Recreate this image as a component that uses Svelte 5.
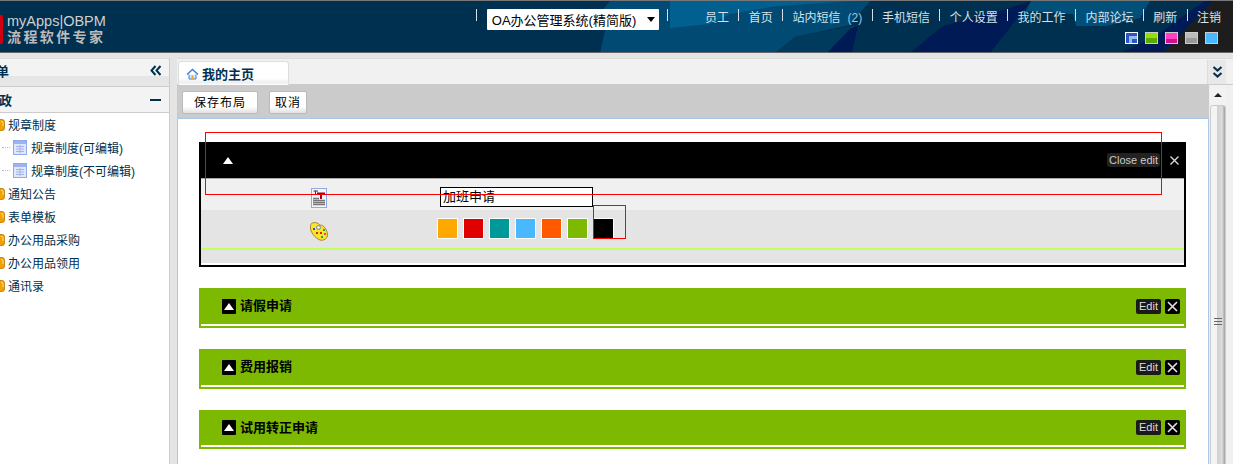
<script>
  const links = [
    { label: '员工' }, { label: '首页' }, { label: '站内短信', count: '(2)' }, { label: '手机短信' },
    { label: '个人设置' }, { label: '我的工作' }, { label: '内部论坛' }, { label: '刷新' }, { label: '注销' }
  ];
  const skins = ['blue', 'green', 'pink', 'gray', 'sky'];
  const menu = ['通知公告', '表单模板', '办公用品采购', '办公用品领用', '通讯录'];
  const colors = ['#ffa800', '#e00000', '#009999', '#4ab8ff', '#ff5a00', '#7db900', '#000000'];
  const portlets = ['请假申请', '费用报销', '试用转正申请'];
</script>

{#snippet folder()}
  <svg class="folder" width="5" height="12" viewBox="0 0 5 12"><path d="M-4 0.500H2a2.500 2.500 0 0 1 2.500 2.500V9A2.500 2.500 0 0 1 2 11.500H-4z" fill="#f0a000" stroke="#b87800" stroke-width="0.8"/><path d="M1 2.500h1a1 1 0 0 1 1 1V7" fill="none" stroke="#ffe08a" stroke-width="1"/></svg>
{/snippet}

{#snippet grid()}
  <svg width="14" height="15" viewBox="0 0 14 15"><rect x="0.500" y="0.500" width="13" height="14" fill="#dfe8fb" stroke="#8fa9ec"/><rect x="1" y="1" width="12" height="3" fill="#9db4ef"/><path d="M3 6.500h8M3 9h8M3 11.500h8M7 5v8" stroke="#9fb4e8" fill="none"/></svg>
{/snippet}

<div class="page">
  <header class="top">
    <svg class="art" width="1233" height="51" viewBox="0 0 1233 51">
      <path d="M610 0L603 8L605 30L600 52H775L795 36L850 24L870 0Z" fill="#014a73"/>
      <path d="M670 0V27L710 23L730 13L777 5L853 0Z" fill="#01608f"/>
      <path d="M775 52L795 36L856 24L827 52Z" fill="#003a5c"/>
      <path d="M827 52L850 28L858 25L852 52Z" fill="#001a55"/>
      <path d="M910 52L943 25L1000 10L1031 0L990 52Z" fill="#001a55"/>
      <path d="M1031 0H1150L1140 17L1106 25L1076 25L1073 13L1026 10Z" fill="#01507a"/>
      <path d="M1120 52L1153 37L1186 13L1205 0H1213L1163 52Z" fill="#001a55"/>
      <path d="M1163 52L1213 0H1233V52Z" fill="#1d1d1d"/>
    </svg>
    <div class="logo">
      <span class="mark"></span>
      <div class="logo-text">
        <span class="logo-en">myApps|OBPM</span>
        <span class="logo-cn">流程软件专家</span>
      </div>
    </div>
    <div class="top-right">
      <div class="nav">
        <i class="sep"></i>
        <div class="select"><span>OA办公管理系统(精简版)</span><b class="caret"></b></div>
        <i class="sep"></i>
        {#each links as link, i}
          {#if i > 0}<i class="sep"></i>{/if}
          <span class="link" class:first={i === 0}>{link.label}{#if link.count}<em>{link.count}</em>{/if}</span>
        {/each}
      </div>
      <div class="skins">
        {#each skins as skin}<span class="skin {skin}"></span>{/each}
      </div>
    </div>
  </header>

  <div class="body">
    <aside class="side">
      <div class="side-title">
        <strong>菜单</strong>
        <svg class="collapse" width="12" height="11" viewBox="0 0 12 11"><path d="M5.500 1L1.500 5.500L5.500 10M10.500 1L6.500 5.500L10.500 10" fill="none" stroke="#00304f" stroke-width="2"/></svg>
      </div>
      <div class="side-group"><strong>行政</strong><span class="minus"></span></div>
      <ul class="tree">
        <li>{@render folder()}规章制度</li>
        <li class="sub"><i class="dots"></i>{@render grid()}<span>规章制度(可编辑)</span></li>
        <li class="sub"><i class="dots"></i>{@render grid()}<span>规章制度(不可编辑)</span></li>
        {#each menu as item}
          <li>{@render folder()}{item}</li>
        {/each}
      </ul>
    </aside>

    <main class="main">
      <div class="tabs">
        <div class="tab">
          <svg width="13" height="12" viewBox="0 0 13 12"><path d="M1 6.500L6.500 1.500L12 6.500" fill="none" stroke="#3f7fd8" stroke-width="1.500"/><path d="M3 6.500V11H10V6.500" fill="#dce9fb" stroke="#3f7fd8"/><rect x="5.500" y="7.500" width="2" height="3.500" fill="#f0a030"/></svg>
          <strong>我的主页</strong>
        </div>
        <div class="tabs-more">
          <svg width="11" height="12" viewBox="0 0 11 12"><path d="M1.500 1L5.500 4.500L9.500 1M1.500 7L5.500 10.500L9.500 7" fill="none" stroke="#0a3050" stroke-width="2.200"/></svg>
        </div>
      </div>

      <div class="workarea">
        <div class="column">
          <div class="toolbar">
            <button class="save">保存布局</button>
            <button class="cancel">取消</button>
          </div>
          <div class="content">
            <section class="editing">
              <div class="edit-head">
                <span class="tri"></span>
                <span class="close-edit">Close edit</span>
                <svg width="9" height="9" viewBox="0 0 9 9"><path d="M0.500 0.500L8.500 8.500M8.500 0.500L0.500 8.500" stroke="#ddd" stroke-width="1.300"/></svg>
              </div>
              <div class="row first">
                <div class="cell-icon">
                  <svg width="16" height="20" viewBox="0 0 16 20"><rect x="0.500" y="0.500" width="15" height="19" fill="#f4f6ff" stroke="#8fa9ec"/><path d="M2.500 3H7M4.500 3V6" stroke="#333" fill="none"/><path d="M6 4.500H14V6.500H11V11H9V6.500H6Z" fill="#a00010"/><path d="M2 10.500H8M2 12.500H14M2 14.500H14M2 16.500H14" stroke="#777" stroke-width="1.300" fill="none"/></svg>
                </div>
                <input class="title-input" value="加班申请" />
              </div>
              <div class="row second">
                <div class="cell-icon">
                  <svg width="18" height="19" viewBox="0 0 18 19"><path d="M2 1C6 0 8 1 10 3C14 3 17 8 17.500 12C18 17 13 19 10 18C5 16 0 10 0.500 5C0.500 3 1 1.500 2 1Z" fill="#f7e62a" stroke="#b08040" stroke-width="1"/><circle cx="8.500" cy="5.500" r="2" fill="#e6e6e6" stroke="#888"/><rect x="3" y="6" width="2" height="2" fill="#3050d0"/><rect x="6" y="10" width="2" height="2" fill="#e02020"/><rect x="10" y="10" width="2" height="2" fill="#e02020"/><rect x="13" y="7" width="2" height="2" fill="#30a040"/><rect x="11" y="14" width="2" height="2" fill="#30a040"/><rect x="14" y="11" width="2" height="2" fill="#e040a0"/></svg>
                </div>
                <div class="swatches">
                  {#each colors as color}<span class="swatch" style="background: {color}"></span>{/each}
                </div>
              </div>
              <div class="row third"></div>
            </section>

            {#each portlets as name, i}
              <section class="portlet" class:last={i === portlets.length - 1}>
                <div class="portlet-head">
                  <span class="tri-box"><span class="tri"></span></span>
                  <strong>{name}</strong>
                  <span class="edit">Edit</span>
                  <span class="close">
                    <svg width="11" height="11" viewBox="0 0 11 11"><path d="M1 1L10 10M10 1L1 10" stroke="#e4e4e4" stroke-width="1.600"/></svg>
                  </span>
                </div>
              </section>
            {/each}

            <div class="outline big"></div>
            <div class="outline small"></div>
          </div>
        </div>
        <div class="scrollbar">
          <div class="arrow"><span></span></div>
          <div class="thumb"><i></i></div>
        </div>
      </div>
    </main>
  </div>
</div>

<style>
  :global(body) {
    margin: 0;
    overflow: hidden;
    background: #fff;
  }

  .page {
    width: 1233px;
    height: 464px;
    overflow: hidden;
    font-family: "Liberation Sans", "Noto Sans CJK SC", sans-serif;
    font-size: 12px;
    color: #00304f;
    display: flex;
    flex-direction: column;
    background: #e4e4e4;
  }

  .top {
    position: relative;
    height: 51px;
    flex: none;
    background: #00304f;
    border-top: 1px solid #777;
    border-bottom: 1px solid #666;
    display: flex;
    justify-content: space-between;
  }

  .art {
    position: absolute;
    left: 0;
    top: 0;
  }

  .logo {
    position: relative;
    display: flex;
    align-items: flex-start;
    gap: 4px;
    padding-top: 13px;
    margin-left: -4px;
  }

  .mark {
    width: 7px;
    height: 29px;
    margin-top: 1px;
    background: #d00010;
    border-radius: 2px;
  }

  .logo-text {
    display: flex;
    flex-direction: column;
    color: #cfcfcf;
    line-height: 14px;
  }

  .logo-en {
    font-size: 14.500px;
  }

  .logo-cn {
    font-size: 14px;
    font-weight: 700;
    letter-spacing: 2.400px;
    color: #bcbcbc;
    margin-top: 2px;
  }

  .top-right {
    position: relative;
    display: flex;
    flex-direction: column;
    align-items: flex-end;
    padding-right: 12px;
  }

  .nav {
    display: flex;
    align-items: center;
    gap: 9.400px;
    margin-top: 8px;
    height: 21px;
    color: #d5e2ea;
  }

  .sep {
    width: 1px;
    height: 12px;
    background: #d8e0e6;
    margin-top: -9px;
  }

  .select {
    width: 172px;
    height: 21px;
    background: #fff;
    color: #000;
    font-size: 13px;
    margin-right: -1px;
    padding: 0 4px 0 5px;
    box-sizing: border-box;
    display: flex;
    align-items: center;
    justify-content: space-between;
    border-radius: 1px;
  }

  .caret {
    border: 4px solid transparent;
    border-top: 5px solid #000;
    border-bottom: 0;
  }

  .link {
    white-space: nowrap;
    margin-top: -7px;
  }

  .link.first {
    margin-left: 27.400px;
  }

  .link em {
    font-style: normal;
    color: #9cc4e4;
    margin-left: 7px;
  }

  .skins {
    display: flex;
    gap: 7px;
    margin: 2px 3px 0 0;
  }

  .skin {
    width: 13px;
    height: 12px;
    box-sizing: border-box;
    border: 1px solid #ccc;
  }

  .skin.blue {
    background: #2a55c8;
    box-shadow: inset 2px 2px 0 1px #2a55c8, inset 5px 5px 0 1px #9db8ee;
    border-color: #fff;
  }

  .skin.green { background: linear-gradient(#90e000 50%, #5fa800 50%); }
  .skin.pink { background: linear-gradient(#ff40c0 65%, #d01090 65%); }
  .skin.gray { background: linear-gradient(#bbb 50%, #999 50%); }
  .skin.sky { background: #4ab8ff; }

  .body {
    flex: 1;
    display: flex;
    min-height: 0;
    border-top: 5px solid #e4e4e4;
    gap: 7px;
  }

  .side {
    width: 169px;
    flex: none;
    background: #fff;
    border-right: 1px solid #ccc;
    overflow: hidden;
  }

  .side-title {
    height: 23px;
    padding-bottom: 4px;
    display: flex;
    justify-content: space-between;
    align-items: center;
    background: linear-gradient(#f3f3f3 62%, #e6e6e6 62%);
    border-top: 1px solid #ddd;
    border-bottom: 1px solid #ccc;
    font-size: 13px;
  }

  .side-title strong {
    margin-left: -17px;
  }

  .side-group strong {
    margin-left: -14px;
  }

  .collapse {
    margin-right: 7px;
  }

  .side-group {
    height: 25px;
    display: flex;
    justify-content: space-between;
    align-items: center;
    background: #f3f3f3;
    border-bottom: 1px solid #ccc;
    font-size: 13px;
  }

  .minus {
    width: 11px;
    height: 2px;
    background: #00304f;
    margin-right: 8px;
  }

  .tree {
    list-style: none;
    margin: 0;
    padding: 0;
  }

  .tree li {
    height: 23px;
    display: flex;
    align-items: center;
  }

  .folder {
    margin-right: 3px;
  }

  .tree li.sub {
    padding-left: 2px;
  }

  .tree li.sub span {
    margin-left: 4px;
  }

  .dots {
    width: 8px;
    margin-right: 3px;
    border-top: 1px dotted #bbb;
  }

  .main {
    flex: 1;
    min-width: 0;
    display: flex;
    flex-direction: column;
    background: #e8e8e8;
  }

  .tabs {
    height: 27px;
    flex: none;
    display: flex;
    justify-content: space-between;
    background: #f1f1f1;
    border-top: 1px solid #ddd;
    border-bottom: 1px solid #ccc;
    box-sizing: border-box;
  }

  .tab {
    margin: 2px 0 -1px 1px;
    width: 111px;
    box-sizing: border-box;
    background: linear-gradient(#fff 70%, #eee 90%, #fff);
    border: 1px solid #ddd;
    border-bottom: 0;
    border-radius: 3px 3px 0 0;
    display: flex;
    align-items: center;
    gap: 3px;
    padding-left: 7px;
    font-size: 13px;
  }

  .tabs-more {
    width: 18px;
    margin: 1px 7px 0 0;
    background: #e8e8e8;
    border-left: 1px solid #ddd;
    display: flex;
    align-items: center;
    justify-content: center;
  }

  .workarea {
    flex: 1;
    min-height: 0;
    display: flex;
    gap: 1px;
    padding-right: 7px;
    background: #f0f0f0;
  }

  .column {
    flex: 1;
    min-width: 0;
    display: flex;
    flex-direction: column;
  }

  .toolbar {
    height: 33px;
    flex: none;
    background: #cbcbcb;
    display: flex;
    align-items: flex-start;
    gap: 11px;
    padding: 6px 5px 0;
    box-sizing: border-box;
  }

  .toolbar button {
    height: 23px;
    padding: 0 0 2px;
    border: 1px solid #bbb;
    border-radius: 2px;
    background: linear-gradient(#fff 70%, #e0e0e0);
    font-family: inherit;
    font-size: 12px;
    color: #000;
    letter-spacing: 1px;
  }

  .save { width: 76px; }
  .cancel { width: 38px; }

  .content {
    position: relative;
    flex: 1;
    min-height: 0;
    background: #fff;
    border: 1px solid #a8c8e8;
    border-bottom: 0;
    padding: 23px 22px 0 21px;
    overflow: hidden;
  }

  .editing {
    border: 2px solid #000;
    border-top: 0;
    margin-bottom: 21px;
    height: 125px;
    box-sizing: border-box;
    display: flex;
    flex-direction: column;
  }

  .edit-head {
    height: 36px;
    flex: none;
    display: flex;
    align-items: center;
    padding: 0 7px 0 22px;
    background: #000;
    margin: 0 -2px;
  }

  .tri {
    display: block;
    width: 0;
    height: 0;
    border-left: 5px solid transparent;
    border-right: 5px solid transparent;
    border-bottom: 7px solid #fff;
  }

  .edit-head .tri {
    margin-left: 2px;
  }

  .close-edit {
    margin: 0 10px 0 auto;
    background: #222;
    color: #ccc;
    font-size: 11px;
    padding: 0 2px;
    line-height: 14px;
    border-radius: 3px;
  }

  .row {
    display: flex;
    align-items: flex-start;
  }

  .row.first {
    height: 32px;
    flex: none;
    box-sizing: border-box;
    background: #f0f0f0;
    border-top: 1px solid #aaa;
  }

  .row.second {
    height: 38px;
    flex: none;
    background: #e4e4e4;
  }

  .row.third {
    flex: 1;
    background: #e4e4e4;
    border-top: 2px solid #c4ff60;
    border-bottom: 2px solid #fff;
  }

  .cell-icon {
    width: 238px;
    padding: 9px 0 0 110px;
    box-sizing: border-box;
    flex: none;
    display: flex;
  }

  .row.second .cell-icon {
    padding: 12px 0 0 109px;
  }

  .title-input {
    width: 153px;
    height: 20px;
    box-sizing: border-box;
    border: 1px solid #000;
    background: #fff;
    padding: 0 2px 3px;
    margin: 8px 0 0 1px;
    font-family: inherit;
    font-size: 13px;
    color: #000;
    border-radius: 0;
    outline: none;
  }

  .swatches {
    display: flex;
    gap: 5px;
    margin: 8px 0 0 -2px;
  }

  .swatch {
    width: 21px;
    height: 21px;
    box-sizing: border-box;
    border: 1px solid #fff;
  }

  .portlet {
    background: #7db900;
    margin-bottom: 21px;
    padding: 0 2px 2px;
  }

  .portlet-head {
    height: 36px;
    display: flex;
    align-items: center;
    padding: 0 4px 0 21px;
    border-bottom: 2px solid #fff;
    color: #000;
    font-size: 13px;
    gap: 4px;
  }

  .portlet.last .portlet-head {
    height: 35px;
  }

  .portlet-head strong {
    margin-top: -3px;
  }

  .tri-box {
    width: 14px;
    height: 15px;
    background: #000;
    border-radius: 1px;
    display: flex;
    align-items: center;
    justify-content: center;
  }

  .edit {
    margin-left: auto;
    background: #1a1a1a;
    color: #ddd;
    font-size: 11px;
    line-height: 15px;
    border-radius: 2px;
    width: 25px;
    height: 15px;
    text-align: center;
  }

  .close {
    width: 15px;
    height: 15px;
    background: #000;
    border-radius: 2px;
    display: flex;
    align-items: center;
    justify-content: center;
  }

  /* red frames that sit on top of the editor */
  .outline {
    position: absolute;
    border: 1px solid #f00;
    box-sizing: border-box;
  }

  .outline.big {
    left: 27px;
    top: 13px;
    width: 957px;
    height: 63px;
  }

  .outline.small {
    left: 415px;
    top: 86px;
    width: 33px;
    height: 34px;
  }

  .scrollbar {
    width: 16px;
    flex: none;
    background: #f2f2f2;
    display: flex;
    flex-direction: column;
  }

  .arrow {
    height: 20px;
    flex: none;
    display: flex;
    align-items: center;
    justify-content: center;
  }

  .arrow span {
    border: 4px solid transparent;
    border-bottom: 4px solid #222;
    border-top: 0;
  }

  .thumb {
    flex: 1;
    background: linear-gradient(90deg, #f4f4f4 40%, #d0d0d0 40%, #dcdcdc 80%, #aaa 95%);
    border: 1px solid #ccc;
    border-bottom: 0;
    border-radius: 3px 3px 0 0;
    position: relative;
  }

  .thumb i {
    position: absolute;
    left: 3px;
    top: 212px;
    width: 8px;
    height: 8px;
    background: repeating-linear-gradient(#666 0 1px, transparent 1px 3px);
  }
</style>
